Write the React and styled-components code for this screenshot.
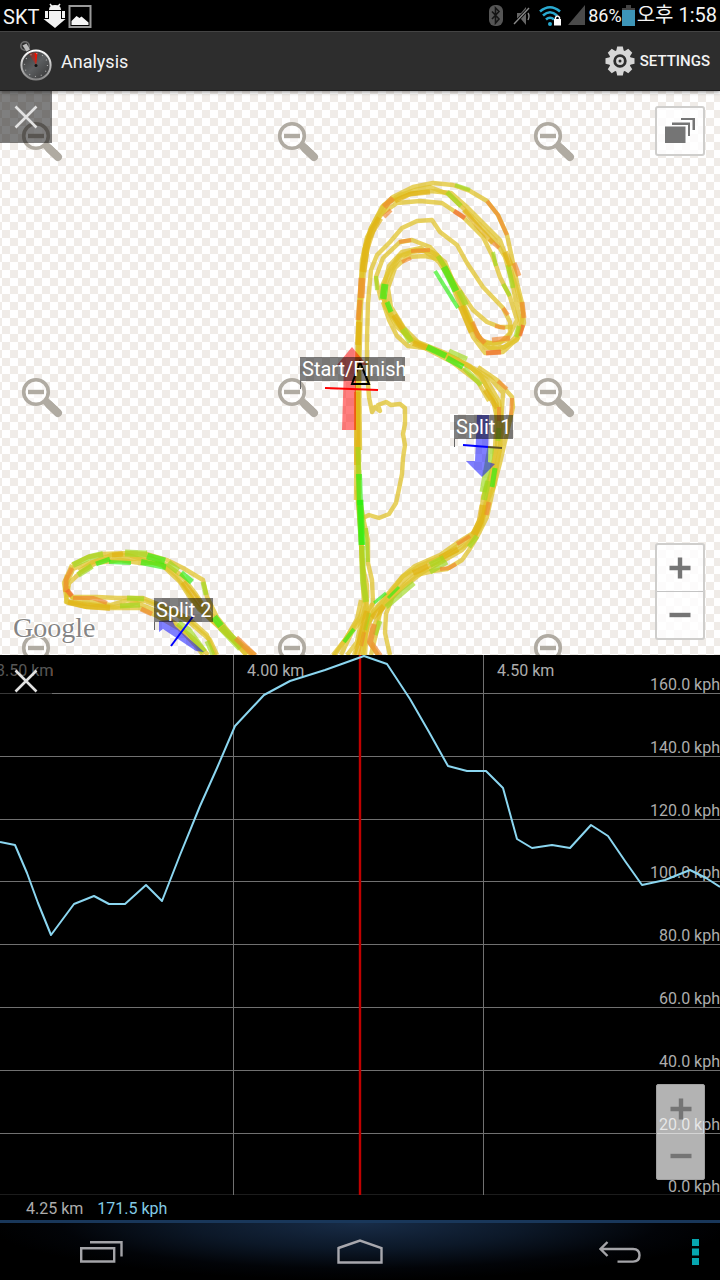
import React from "react";
import styled, { createGlobalStyle } from "styled-components";

const GlobalStyle = createGlobalStyle`
  *, *::before, *::after { box-sizing: border-box; }
  html, body { margin: 0; background: #000; }
  body, button { font-family: Roboto, "Noto Sans CJK KR", sans-serif; }
  svg { display: block; }
`;

const Screen = styled.div`
  display: grid;
  grid-template-rows: 31px 60px minmax(0, 47fr) minmax(0, 45fr) 25px 60px;
  min-height: 100vh;
  background: #000;
`;

const StatusBar = styled.header`
  display: flex;
  align-items: center;
  justify-content: space-between;
  padding: 0 3px;
  color: #f4f4f4;
  font-size: 20px;
  line-height: 31px;
`;

const StatusGroup = styled.div`
  display: flex;
  align-items: center;
  gap: ${(p) => p.$gap}px;
`;

const Carrier = styled.span`
  padding-top: 4px;
`;

const Battery = styled.span`
  display: flex;
  align-items: center;
  font-size: 18px;
`;

const Clock = styled.time`
  font-size: 20px;
`;

const ActionBar = styled.div`
  position: relative;
  z-index: 1;
  display: flex;
  align-items: center;
  justify-content: space-between;
  padding: 0 10px 0 20px;
  background: #2d2d2d;
  border-top: 1px solid #444;
  border-bottom: 1px solid #1c1c1c;
  box-shadow: 0 1px 4px rgba(0, 0, 0, 0.45);
`;

const Brand = styled.div`
  display: flex;
  align-items: center;
  gap: 9px;
`;

const Title = styled.h1`
  margin: 0;
  padding-top: 2px;
  color: #f3f3f3;
  font-size: 18px;
  font-weight: 400;
  line-height: 24px;
`;

const SettingsButton = styled.button`
  display: flex;
  align-items: center;
  gap: 5px;
  height: 48px;
  padding: 0;
  border: 0;
  background: none;
  color: #f3f3f3;
  font-size: 15px;
  font-weight: 500;
`;

const Panel = styled.section`
  position: relative;
  min-width: 0;
  overflow: hidden;
`;

const MapPanel = styled(Panel)`
  background: repeating-conic-gradient(#f0ece8 0 25%, #fff 0 50%) 10px 11px / 16px 16px;
`;

const Drawing = styled.svg`
  width: 100%;
  height: 100%;
`;

const CloseButton = styled.button`
  position: absolute;
  top: 0;
  left: 0;
  display: grid;
  place-items: center;
  width: 52px;
  height: 52px;
  padding: 0;
  border: 0;
  background: rgba(0, 0, 0, 0.5);
`;

const LayersButton = styled.button`
  position: absolute;
  top: 15px;
  right: 15px;
  display: grid;
  place-items: center;
  width: 50px;
  height: 50px;
  padding: 0;
  border: 2px solid #cfcecc;
  border-radius: 3px;
  background: rgba(255, 255, 255, 0.8);
`;

const ZoomControls = styled.div`
  position: absolute;
  right: 15px;
  bottom: 15px;
  display: flex;
  flex-direction: column;
  width: ${(p) => (p.$dim ? 49 : 50)}px;
  height: ${(p) => (p.$dim ? 96 : 97)}px;
  border: ${(p) => (p.$dim ? "1px solid #a0a0a0" : "2px solid #cfcecc")};
  border-radius: ${(p) => (p.$dim ? 2 : 3)}px;
  background: ${(p) => (p.$dim ? "rgba(255, 255, 255, 0.7)" : "rgba(255, 255, 255, 0.8)")};
`;

const ZoomButton = styled.button`
  display: grid;
  flex: 1;
  place-items: center;
  padding: 0;
  border: 0;
  border-top: ${(p) => (p.$divided ? "1px solid #c4c4c4" : "0")};
  background: none;
`;

const GridLabel = styled.text`
  fill: #adadad;
  font-family: Roboto, sans-serif;
  font-size: 16px;
`;

const TagText = styled.text`
  fill: #fff;
  font-family: Roboto, sans-serif;
  font-size: 20px;
`;

const LogoText = styled.text`
  fill: #6f6f6f;
  stroke: #fff;
  stroke-width: 2px;
  paint-order: stroke;
  fill-opacity: 0.85;
  font-family: "Liberation Serif", serif;
  font-size: 28px;
`;

const Readout = styled.div`
  display: flex;
  align-items: center;
  gap: 14px;
  padding: 3px 26px 0;
  color: #adadad;
  font-size: 16px;
  line-height: 22px;
`;

const Speed = styled.span`
  color: #82cbe6;
`;

const NavBar = styled.nav`
  display: flex;
  border-top: 3px solid #19375a;
  background: radial-gradient(ellipse 52% 100% at 50% 0, #182c47 0%, #0c1828 45%, #020408 80%, #000 100%);
`;

const NavSide = styled.div`
  display: flex;
  flex: 1;
  justify-content: ${(p) => (p.$end ? "flex-end" : "stretch")};
`;

const NavButton = styled.button`
  display: grid;
  flex: 0 0 ${(p) => p.$width}px;
  place-items: center;
  padding: 0;
  border: 0;
  background: none;
`;

const YELLOW = "#e0c32c";
const GOLD = "#e0b010";
const LIME = "#9cd81c";
const GREEN = "#2af010";
const ORANGE = "#f0862c";
const RED = "#f4602c";

const laps = [
  "357,430 357,370 359,303 362,273 365,247 370,230 382,207 393,197 413,187 433,183 453,185 470,191 487,201 498,215 507,235 512,258 517,283 522,303 524,323 518,338 503,352 485,353 473,337 463,313 453,287 443,265 437,255 427,250 412,252 400,257 392,270 385,285 383,298 390,313 402,330 412,342 427,347 450,358 473,368 490,378 503,393 501,423 500,450 493,480 486,505 482,520 474,537 462,550 443,561 423,572 400,590 383,607 372,630 370,643 378,655",
  "359,500 359,375 361,305 364,270 369,240 379,218 389,202 410,194 430,191 451,193 468,208 483,223 500,240 509,265 517,290 523,313 520,333 505,347 486,348 475,330 464,305 455,286 445,262 432,252 416,250 399,256 389,271 382,286 385,306 397,327 414,341 434,350 457,359 480,374 493,400 498,423 497,447 491,473 483,497 481,517 472,535 459,545 441,557 419,566 402,577 387,595 373,612 366,633 363,655",
  "356,500 357,400 358,340 360,300 362,260 367,237 380,215 397,203 420,201 442,203 463,217 483,237 493,257 500,277 510,297 517,320 507,340 493,344 481,340 469,320 459,297 447,271 439,259 425,256 407,257 395,268 388,288 391,307 404,328 418,342 443,352 470,366 484,382 497,404 496,432 494,463 487,493 484,515 475,532 457,543 440,555 415,566 403,576 391,592 376,610 367,626 365,655",
  "360,450 359,380 359,320 363,265 371,228 384,205 400,195 415,190 430,187 448,194 463,208 481,226 495,240 505,257 512,280 515,298 520,320 517,340 500,349 490,348 478,339 469,318 458,294 450,279 439,262 421,248 402,252 389,266 383,289 389,312 408,337 424,346 447,355 467,365 486,379 499,401 503,427 498,459 494,486 485,507 482,525 470,542 457,550 431,565 411,574 392,592 380,612 377,630 371,655",
  "478,367 497,380 512,397 513,407 507,433 500,463 493,490 487,517 477,537 469,550 462,560 447,569 433,571 416,575 405,584 393,596 386,614 385,633 390,655",
  "367,340 368,303 371,270 377,255 390,242 402,228 417,221 432,220 440,232 457,245 467,263 483,287 503,308 510,322 510,333 500,343 483,343",
  "381,300 377,283 376,277 383,258 400,242 412,240 430,247 440,258 454,282 473,310 487,322 500,327 513,327",
  "367,340 367,370 369,397 372,412 375,407 380,411 378,405 386,402 391,405 400,404 405,408 405,424 403,434 405,445 403,458 402,474 399,489 396,503 389,514 379,518 369,515 363,518",
  "383,302 389,320 397,336 408,346 425,348 452,362 478,382 489,401",
  "358,440 358,490 360,520 362,567 364,605 360,617 347,637 333,655",
  "360,500 364,522 368,540 368,563 372,580 373,603 365,615 352,632 341,655",
  "357,490 361,540 363,568 367,585 367,615 361,635 354,655",
  "361,520 362,560 366,605 361,622 357,642 347,655",
  "361,600 357,619 345,640 334,656",
  "373,603 368,622 364,640 360,656",
  "72,565 88,557 103,554 127,553 147,554 167,560 183,568 203,580 207,597 217,617 233,637 255,655",
  "66,585 73,569 88,563 110,558 133,559 151,558 167,565 181,575 195,593 205,608 219,623 231,638 247,655",
  "67,597 69,583 80,573 96,563 120,560 140,563 160,563 176,575 188,592 199,609 221,628 236,643 246,655",
  "79,571 93,562 111,555 128,555 144,560 163,566 180,582 191,599 211,620 226,634 252,655",
  "72,565 64,583 67,602 87,607 110,608 140,608 157,616 180,629 197,647 203,655",
  "67,575 65,590 73,598 92,602 110,605 128,600 145,601 163,608 187,620 210,640 217,655",
  "67,590 72,597 97,597 117,598 143,598 160,605 188,618 207,635 215,655",
  "68,586 66,602 88,604 115,607 137,603 157,611 176,624 195,640 208,655",
];

const marks = [
  [ORANGE, 6, "384,207 393,198"], [ORANGE, 4, "384,217 391,210"],
  [ORANGE, 7, "361,298 362,278"], [GOLD, 7, "363,272 366,249 372,231 380,218"],
  [ORANGE, 5, "358,320 360,300"], [GOLD, 6, "358,345 359,322"],
  [GOLD, 6, "357,465 357,392"], [GOLD, 5, "395,201 410,194 430,192"],
  [LIME, 4, "455,185 470,190"], [LIME, 5, "447,192 461,206"],
  [ORANGE, 4, "487,201 498,215 507,235"], [RED, 5, "454,211 465,218"],
  [ORANGE, 4, "489,239 499,248"], [LIME, 4, "493,252 496,266"],
  [LIME, 4, "503,284 510,296"], [LIME, 5, "508,265 513,288"],
  [GOLD, 5, "464,210 479,228 493,243"], [ORANGE, 5, "514,263 519,276"],
  [GOLD, 6, "505,252 511,266"], [ORANGE, 5, "522,302 524,318"],
  [RED, 4, "523,325 520,336"], [LIME, 5, "519,326 516,337"],
  [ORANGE, 5, "492,340 510,338"], [RED, 5, "486,353 501,352"],
  [ORANGE, 5, "472,322 478,336 485,343"], [ORANGE, 4, "495,326 505,328"],
  [ORANGE, 4, "503,308 508,315"], [ORANGE, 4, "399,242 411,240"],
  [ORANGE, 4, "411,251 430,250"], [ORANGE, 4, "402,262 411,258"],
  [LIME, 5, "438,256 445,267"], [GREEN, 7, "444,267 456,291"],
  [GREEN, 4, "435,271 458,308"], [LIME, 6, "459,291 466,305"],
  [GOLD, 7, "461,306 472,332"], [GREEN, 7, "385,284 383,299"],
  [LIME, 4, "376,276 377,290"], [GREEN, 5, "387,302 391,312"],
  [GOLD, 6, "394,315 403,329"], [LIME, 7, "403,329 411,342"],
  [GOLD, 6, "413,343 427,348"], [GREEN, 6, "427,347 446,356"],
  [GREEN, 6, "447,358 463,367"], [LIME, 5, "449,351 467,359"],
  [LIME, 5, "464,368 481,385"], [GOLD, 5, "485,390 497,408"],
  [ORANGE, 4, "498,381 507,389"], [ORANGE, 4, "512,398 511,415"],
  [ORANGE, 4, "499,407 499,421"], [LIME, 5, "499,428 498,441"],
  [LIME, 7, "491,447 486,475 483,492"], [GREEN, 5, "495,468 492,487"],
  [LIME, 6, "488,481 484,500"], [ORANGE, 5, "489,502 486,515"],
  [GOLD, 7, "483,505 480,522 474,535"], [ORANGE, 4, "457,544 470,536"],
  [LIME, 5, "477,536 469,547"], [GOLD, 6, "440,558 458,549"],
  [LIME, 6, "430,565 444,558"], [LIME, 5, "430,572 447,562"],
  [ORANGE, 4, "440,569 449,568 456,564"], [GOLD, 6, "413,573 428,566"],
  [GREEN, 3, "374,603 386,593"], [GREEN, 3, "388,598 399,587"],
  [LIME, 5, "386,607 414,583"], [GOLD, 6, "372,618 384,606"],
  [LIME, 5, "375,635 380,621"], [ORANGE, 6, "374,624 370,642 380,656"],
  [LIME, 5, "358,447 359,480"], [GREEN, 6, "359,474 360,505"],
  [GREEN, 7, "360,500 362,545"], [GREEN, 5, "360,500 362,545"],
  [LIME, 6, "362,546 363,580 366,602"],
  [LIME, 4, "366,528 368,562"], [GREEN, 4, "344,642 354,629"],
  [LIME, 4, "365,630 369,613"], [ORANGE, 4, "364,632 361,646"],
  [GOLD, 6, "357,655 361,635 367,611"],
  [LIME, 6, "73,565 90,557 103,554"], [GOLD, 5, "112,555 123,554"],
  [LIME, 7, "125,553 147,554"], [GREEN, 7, "147,556 165,561"],
  [GREEN, 5, "96,564 110,559"], [GREEN, 4, "109,562 131,563"],
  [GREEN, 6, "141,562 166,567"], [LIME, 6, "78,575 92,566"],
  [LIME, 7, "168,563 178,571"], [GREEN, 6, "181,573 192,582"],
  [LIME, 5, "203,582 206,595"], [GOLD, 6, "183,582 203,607"],
  [GREEN, 7, "214,617 221,626"], [LIME, 8, "221,627 241,648"],
  [ORANGE, 6, "236,638 255,656"], [ORANGE, 5, "72,568 66,580 66,592"],
  [RED, 5, "67,590 72,596"], [ORANGE, 4, "73,598 93,598 107,603"],
  [GOLD, 6, "68,602 86,606 110,608"], [LIME, 5, "127,598 144,599"],
  [LIME, 5, "120,606 140,605"], [ORANGE, 5, "141,609 152,614"],
  [LIME, 7, "178,623 188,630 204,652"], [LIME, 5, "207,641 213,655"],
];

const speedTrace =
  "0,842 15,845 27,873 38,903 51,935 74,904 94,896 109,904 125,904 146,885 162,901 180,855 200,806 217,768 235,726 264,695 290,681 325,670 364,656 387,664 410,699 429,732 448,766 467,771 486,771 503,788 517,839 532,848 552,845 570,848 591,825 608,836 625,861 642,885 665,880 690,870 706,878 720,887";

const speedGrid = [
  [693, "160.0 kph"], [756, "140.0 kph"], [819, "120.0 kph"], [881, "100.0 kph"],
  [944, "80.0 kph"], [1007, "60.0 kph"], [1070, "40.0 kph"], [1133, "20.0 kph"], [1195, "0.0 kph"],
];

function MissingTile({ x, y }) {
  return (
    <g transform={`translate(${x} ${y})`} stroke="#b0aba2" fill="none">
      <circle r="12.3" strokeWidth="3.6" fill="#fff" fillOpacity=".6" />
      <path d="M-8 0H8" strokeWidth="4.4" />
      <path d="M9 8.500L22.500 21.500" strokeWidth="7.500" strokeLinecap="butt" />
      <path d="M13 12.500L22 21" strokeWidth="8" strokeLinecap="round" />
    </g>
  );
}

function Tag({ x, y, width, children }) {
  return (
    <g>
      <rect x={x} y={y} width={width} height="24" fill="#000" fillOpacity=".5" />
      <path d={`M${x + 0.5} ${y + 24}v8`} stroke="#666" />
      <TagText x={x + 2} y={y + 19}>{children}</TagText>
    </g>
  );
}

function TrackMap() {
  return (
    <Drawing viewBox="0 91 720 564" preserveAspectRatio="xMidYMid slice" role="img" aria-label="Track map">
      {[136, 392, 648].map((y) => [36, 292, 548].map((x) => <MissingTile key={`${x}-${y}`} x={x} y={y} />))}
      <LogoText x="13" y="637">Google</LogoText>
      <g fill="none" strokeLinejoin="round">
        {laps.map((points) => (
          <polyline key={points} points={points} stroke={YELLOW} strokeWidth="4.4" strokeOpacity=".75" />
        ))}
        {marks.map(([color, width, points], i) => (
          <polyline key={i} points={points} stroke={color} strokeWidth={width} strokeOpacity=".65" />
        ))}
      </g>
      <path d="M352 347l15 18h-11v65h-14l2-65h-7z" fill="#f00" fillOpacity=".5" />
      <path d="M477 415h12l-1 47 7 2-13 13-16-16h9z" fill="#00f" fillOpacity=".5" />
      <path d="M159 621v11l4-3 33 22 8 1-29-26-3-6z" fill="#00f" fillOpacity=".5" />
      <path d="M360 362l-8 22h17z" fill="none" stroke="#000" strokeWidth="2" />
      <path d="M325 388l53 2" stroke="#f00" strokeWidth="2" />
      <path d="M463 445l25 2" stroke="#00f" strokeWidth="2" />
      <path d="M488 447l14 1" stroke="#5a5128" strokeWidth="2" />
      <path d="M194 615l-23 31" stroke="#00f" strokeWidth="2" />
      <Tag x={300} y={357} width={105}>Start/Finish</Tag>
      <Tag x={454} y={415} width={59}>Split 1</Tag>
      <Tag x={154} y={598} width={59}>Split 2</Tag>
    </Drawing>
  );
}

function SpeedChart() {
  return (
    <Drawing viewBox="0 655 720 540" preserveAspectRatio="xMidYMid slice" role="img" aria-label="Speed by distance">
      <g stroke="#707070">
        {speedGrid.map(([y]) => (
          <path key={y} d={y === 1195 ? "M0 1194.5H720" : `M0 ${y + 0.5}H720`} stroke={y === 1195 ? "#1c1c1c" : undefined} />
        ))}
        <path d="M233.5 655V1195M483.5 655V1195" />
      </g>
      <GridLabel x="-4" y="676">3.50 km</GridLabel>
      <GridLabel x="247" y="676">4.00 km</GridLabel>
      <GridLabel x="497" y="676">4.50 km</GridLabel>
      {speedGrid.map(([y, label]) => (
        <GridLabel key={label} x="720" y={y - 3} textAnchor="end">{label}</GridLabel>
      ))}
      <path d="M360 655V1195" stroke="#c00000" strokeWidth="2.4" />
      <polyline points={speedTrace} fill="none" stroke="#8bd6f0" strokeWidth="2" strokeLinejoin="round" />
    </Drawing>
  );
}

function CloseIcon() {
  return (
    <svg width="24" height="24" viewBox="0 0 24 24" aria-hidden="true">
      <path d="M1.5 1.5l21 21M22.5 1.5l-21 21" stroke="#e2e2e2" strokeWidth="2.6" />
    </svg>
  );
}

function Sign({ plus }) {
  return (
    <svg width="22" height="22" viewBox="0 0 22 22" aria-hidden="true">
      <path d={plus ? "M.5 11h21M11 .5v21" : "M.5 11h21"} stroke="#757575" strokeWidth="4.4" />
    </svg>
  );
}

function Zoom({ dim, target }) {
  return (
    <ZoomControls $dim={dim}>
      <ZoomButton type="button" aria-label={`Zoom in ${target}`}><Sign plus /></ZoomButton>
      <ZoomButton type="button" $divided={!dim} aria-label={`Zoom out ${target}`}><Sign /></ZoomButton>
    </ZoomControls>
  );
}

function StopwatchIcon() {
  return (
    <svg width="32" height="42" viewBox="0 0 32 42" aria-hidden="true">
      <defs>
        <linearGradient id="ring" x1="0" y1="0" x2="0" y2="1">
          <stop stopColor="#fff" />
          <stop offset="1" stopColor="#858585" />
        </linearGradient>
        <linearGradient id="dial" x1="0" y1="0" x2="1" y2="1">
          <stop stopColor="#333" />
          <stop offset=".5" stopColor="#5c5e60" />
          <stop offset="1" stopColor="#333" />
        </linearGradient>
      </defs>
      <circle cx="5" cy="6" r="4.2" fill="none" stroke="#707070" strokeWidth="1.6" />
      <path d="M2.500 5.500l4-2 3.500 6-3.500 2z" fill="#bbb" />
      <circle cx="16" cy="25" r="14.600" fill="url(#dial)" stroke="url(#ring)" strokeWidth="2" />
      <path d="M16 25L9 13.500Q12.500 12 16.800 12.500z" fill="#e01808" fillOpacity=".4" />
      <path d="M16 25l-1.500-12h3z" fill="#f01000" />
      <circle cx="16" cy="25" r="11.500" fill="none" stroke="#aaa" strokeWidth="1.200" strokeDasharray="1 5.020" />
      <circle cx="16" cy="25.500" r="1.500" fill="#111" />
    </svg>
  );
}

function GearIcon() {
  return (
    <svg width="30" height="30" viewBox="-15 -15 30 30" aria-hidden="true">
      <g fill="#d6d6d6">
        {[0, 45, 90, 135, 180, 225, 270, 315].map((a) => (
          <path key={a} d="M-4-9l1.200-5.500h5.600L4-9z" transform={`rotate(${a})`} />
        ))}
        <circle r="11" />
      </g>
      <circle r="5.300" fill="none" stroke="#2d2d2d" strokeWidth="2.800" />
      <circle r="1.500" fill="#2d2d2d" />
    </svg>
  );
}

function NotificationIcons() {
  return (
    <svg width="49" height="25" viewBox="0 0 49 25" aria-hidden="true">
      <path d="M6 7Q6 2 12 2T18 7zM6 8h12v8h4.500L12 25 .5 16H6zM2 8h3v7H2zM19 8h3v7h-3z" fill="#f2f2f2" />
      <path d="M7 1l2 2.500M17 1l-2 2.500" stroke="#f2f2f2" strokeWidth="1.500" />
      <rect x="26.500" y="3" width="21" height="21" fill="none" stroke="#999" strokeWidth="2" />
      <path d="M28.500 22v-4l5-5 3 2 2-1.500 7 6V22z" fill="#f4f4f4" />
    </svg>
  );
}

function RadioIcons() {
  return (
    <svg width="98" height="24" viewBox="0 0 98 24" aria-hidden="true">
      <rect x="1" y="1" width="14" height="21" rx="6" fill="#555" />
      <path d="M4 7.500l7 7.500-3.500 4V4L11 7.500 4 15" fill="none" stroke="#151515" strokeWidth="1.600" />
      <path d="M29 9h4l5-6v18l-5-6h-4z" fill="#666" />
      <path d="M26 20L41 4" stroke="#000" strokeWidth="3" />
      <path d="M26 20L41 4M40 9q2 3 0 7" fill="none" stroke="#888" strokeWidth="1.400" />
      <g fill="none" stroke="#29a9d0" strokeWidth="2.600">
        <path d="M52 7.500Q62 -1 72 7.500" />
        <path d="M55 11.500Q62 5 69 11.500" />
        <path d="M58 15.500Q62 12 66 15.500" />
      </g>
      <circle cx="62" cy="20" r="2" fill="#29a9d0" />
      <path d="M67.500 16v-2.500q2-3 4 0V16" fill="none" stroke="#fff" strokeWidth="1.400" />
      <rect x="66" y="15" width="7" height="6.500" fill="#fff" />
      <path d="M97 1v20H80z" fill="#4a4a4a" />
    </svg>
  );
}

export default function App() {
  return (
    <>
      <GlobalStyle />
      <Screen>
        <StatusBar>
          <StatusGroup $gap={4}>
            <Carrier>SKT</Carrier>
            <NotificationIcons />
          </StatusGroup>
          <StatusGroup $gap={2}>
            <RadioIcons />
            <Battery>
              86%
              <svg width="13" height="21" viewBox="0 0 13 21" aria-hidden="true">
                <path d="M4 0h5v3h4v3H0V3h4z" fill="#444" />
                <path d="M0 5h13v16H0z" fill="#3d95b8" />
              </svg>
            </Battery>
            <Clock dateTime="13:58">오후 1:58</Clock>
          </StatusGroup>
        </StatusBar>

        <ActionBar>
          <Brand>
            <StopwatchIcon />
            <Title>Analysis</Title>
          </Brand>
          <SettingsButton type="button">
            <GearIcon />
            SETTINGS
          </SettingsButton>
        </ActionBar>

        <MapPanel>
          <TrackMap />
          <CloseButton type="button" aria-label="Close map"><CloseIcon /></CloseButton>
          <LayersButton type="button" aria-label="Map layers">
            <svg width="30" height="26" viewBox="0 1 30 26" fill="#757575" aria-hidden="true">
              <path d="M0 9.500h20.500V26H0zM7 5.500h18V19h-2V8H7zM16 1h14V13h-2.500V3H16z" />
            </svg>
          </LayersButton>
          <Zoom target="map" />
        </MapPanel>

        <Panel>
          <SpeedChart />
          <CloseButton type="button" aria-label="Close chart"><CloseIcon /></CloseButton>
          <Zoom dim target="chart" />
        </Panel>

        <Readout>
          <span>4.25 km</span>
          <Speed>171.5 kph</Speed>
        </Readout>

        <NavBar>
          <NavSide>
            <NavButton type="button" aria-label="Recent apps" $width={202}>
              <svg width="43" height="22" viewBox="0 0 43 22" fill="none" stroke="#a4a4a8" strokeWidth="2.400" aria-hidden="true">
                <path d="M1.200 7.200h33v13.300h-33zM10 1.300h31.500V15.500" />
              </svg>
            </NavButton>
          </NavSide>
          <NavButton type="button" aria-label="Home" $width={120}>
            <svg width="46" height="25" viewBox="0 0 46 25" fill="none" stroke="#a8a8ae" strokeWidth="2.400" aria-hidden="true">
              <path d="M1.500 9L23 1.500 44.500 9v14.500h-43z" />
            </svg>
          </NavButton>
          <NavSide $end>
            <NavButton type="button" aria-label="Back" $width={100}>
              <svg width="42" height="22" viewBox="0 0 42 22" fill="none" stroke="#a4a4a8" strokeWidth="2.400" aria-hidden="true">
                <path d="M1.500 8H34q6.500 0 6.500 6.300t-6.500 6.300H18.500M8.500 1L1.500 8l7 7" />
              </svg>
            </NavButton>
            <NavButton type="button" aria-label="Menu" $width={50}>
              <svg width="7" height="26" viewBox="0 0 7 26" fill="#06a6b0" aria-hidden="true">
                <path d="M0 0h7v7H0zM0 9.500h7v7H0zM0 19h7v7H0z" />
              </svg>
            </NavButton>
          </NavSide>
        </NavBar>
      </Screen>
    </>
  );
}
